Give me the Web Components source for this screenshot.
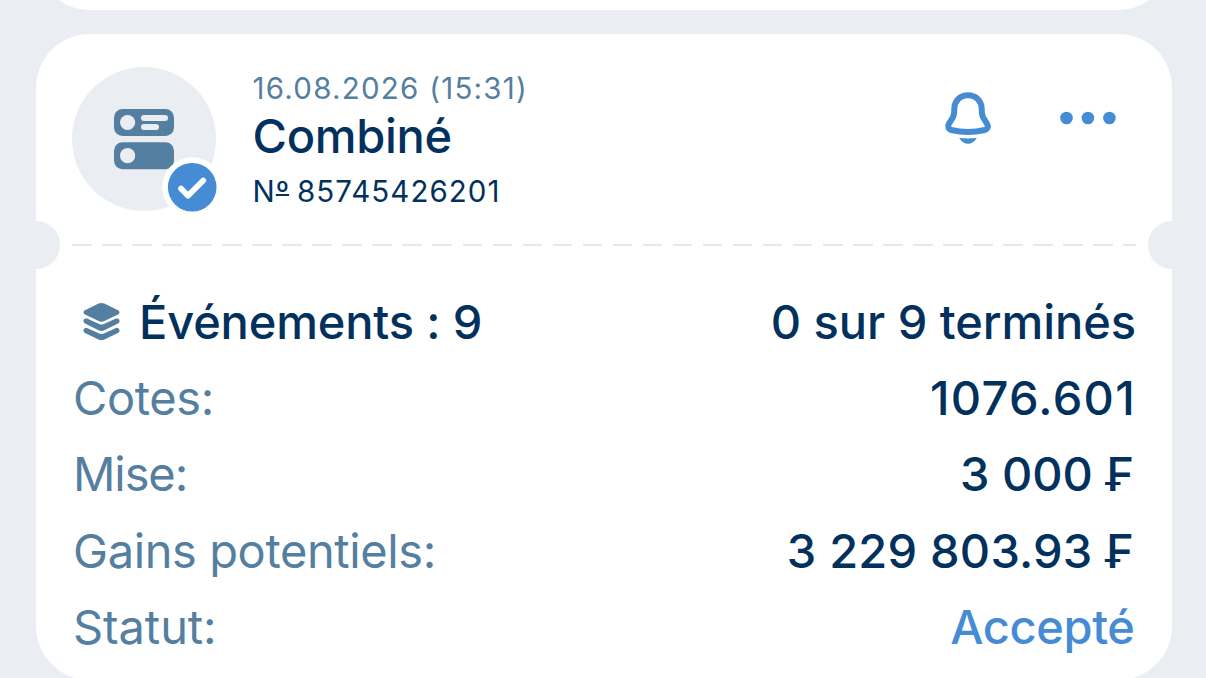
<!DOCTYPE html>
<html lang="fr">
<head>
<meta charset="utf-8">
<title>Coupon</title>
<style>
  body {
    margin: 0;
    height: 678px;
    overflow: hidden;
    background: #eaeef3;
    color: #03315e;
    font-family: Inter, "Liberation Sans", sans-serif;
    --muted: #557fa1;
    --accent: #458cd5;
    --page: #eaeef3;
  }
</style>
</head>
<body>

<bet-list>
  <bet-card class="previous"></bet-card>
  <bet-card>
    <bet-header slot="header" date="16.08.2026 (15:31)" name="Combiné" number="85745426201"></bet-header>
    <bet-row style="--label-spacing: -0.15px; --value-spacing: -0.05px" strong>
      <bet-icon slot="icon" name="layers"></bet-icon>
      Événements : 9
      <span slot="value">0 sur 9 terminés</span>
    </bet-row>
    <bet-row style="--value-spacing: 1.3px; --value-end: 0px">Cotes:<span slot="value">1076.601</span></bet-row>
    <bet-row style="--label-spacing: -1.1px; --value-end: 2px">Mise:<span slot="value">3 000 ₣</span></bet-row>
    <bet-row style="--value-spacing: 0.2px; --value-end: 2px">Gains potentiels:<span slot="value">3 229 803.93 ₣</span></bet-row>
    <bet-row style="--label-spacing: -0.1px; --value-spacing: -0.4px; --value-end: 1.5px" accent>Statut:<span slot="value">Accepté</span></bet-row>
  </bet-card>
</bet-list>

<script>
// ICONS (viewBox size = drawn size)
const ICONS = {
  combo: { w: 60, h: 60, svg: `
    <rect width="60" height="27" rx="8.5" fill="var(--muted)"/>
    <rect y="33.3" width="60" height="27" rx="8.5" fill="var(--muted)"/>
    <g fill="var(--page)">
      <circle cx="13.6" cy="13.5" r="7.6"/>
      <circle cx="13.6" cy="46.7" r="7.6"/>
      <rect x="27" y="6" width="27" height="6" rx="3"/>
      <rect x="27" y="15" width="18" height="6" rx="3"/>
    </g>` },
  check: { w: 60, h: 60, svg: `
    <circle cx="30.200" cy="30.300" r="30" fill="#fff"/>
    <circle cx="30.200" cy="30.300" r="24.300" fill="var(--accent)"/>
    <path d="M19 31.500l7 7.200 15.200-15.200" fill="none" stroke="#fff" stroke-width="5.800" stroke-linecap="round" stroke-linejoin="round"/>` },
  bell: { w: 48, h: 54, svg: `
    <path d="M24 4.300C16 4.300 10.400 10 10.300 17.600C10.200 23.400 10 25 7.200 29.200L5 32.700C3.300 35.500 4.200 38.200 7.300 39C18 41.500 30 41.500 40.700 39C43.800 38.200 44.700 35.500 43 32.700L40.800 29.200C38 25 37.800 23.400 37.700 17.600C37.600 10 32 4.300 24 4.300Z" fill="none" stroke="var(--accent)" stroke-width="6" stroke-linejoin="round"/>
    <path d="M15.200 47Q24 47.800 32.800 47C30.500 50.900 27.500 52.800 24 52.800S17.500 50.900 15.200 47Z" fill="var(--accent)"/>` },
  dots: { w: 56, h: 14, svg: `
    <g fill="var(--accent)">
      <circle cx="6.500" cy="7" r="6.300"/>
      <circle cx="27.900" cy="7" r="6.300"/>
      <circle cx="49.400" cy="7" r="6.300"/>
    </g>` },
  layers: { w: 37, h: 40, svg: `
    <g fill="var(--muted)">
      <path d="M15.600 1.600Q18.500.2 21.400 1.600L35 8.300Q38 10.500 35 12.500L21.400 19Q18.500 20.300 15.600 19L2 12.500Q-1 10.500 2 8.300Z"/>
      <path d="M1.600 16.800Q2.600 16.100 4 16.600L16.200 22Q18.500 23 20.800 22L33 16.600Q34.400 16.100 35.400 16.800C37.200 18.200 36.900 20.500 35 21.500L21.400 28.200Q18.500 29.600 15.600 28.200L2 21.500C.1 20.500-.2 18.200 1.600 16.800Z"/>
      <path d="M1.600 26.200Q2.600 25.500 4 26L16.200 31.500Q18.500 32.500 20.800 31.500L33 26Q34.400 25.500 35.400 26.200C37.200 27.600 36.900 29.900 35 30.900L21.400 37.600Q18.500 39 15.600 37.600L2 30.900C.1 29.900-.2 27.600 1.600 26.200Z"/>
    </g>` }
};

class BetIcon extends HTMLElement {
  connectedCallback() {
    const { w, h, svg } = ICONS[this.getAttribute("name")];
    this.attachShadow({ mode: "open" }).innerHTML = `
      <style>
        :host { display: block; flex: none; }
        svg { display: block; overflow: visible; }
      </style>
      <svg width="${w}" height="${h}" viewBox="0 0 ${w} ${h}">${svg}</svg>
    `;
  }
}

class BetList extends HTMLElement {
  connectedCallback() {
    this.attachShadow({ mode: "open" }).innerHTML = `
      <style>
        :host {
          display: flex;
          flex-direction: column;
          gap: 24px;
          padding: 0 34px 0 36px;
        }
      </style>
      <slot></slot>
    `;
  }
}

class BetCard extends HTMLElement {
  connectedCallback() {
    this.attachShadow({ mode: "open" }).innerHTML = `
      <style>
        :host {
          display: block;
          box-sizing: border-box;
          height: 646px;
          padding: 33px 36px 0;
          border-radius: 54px;
          background: #fff;
        }
        :host(.previous) {
          height: 200px;
          margin-top: -190px;
        }
        :host(.previous) .divider { display: none; }

        .divider {
          display: flex;
          align-items: center;
          justify-content: space-between;
          height: 48px;
          margin: 9px -36px 0;
        }
        .notch {
          width: 24px;
          height: 48px;
          background: var(--page);
        }
        .left { border-radius: 0 24px 24px 0; }
        .right { border-radius: 24px 0 0 24px; }
        .dashes {
          width: 1064px;
          height: 2px;
          background: repeating-linear-gradient(90deg, #e5e8ee 0 19.5px, transparent 19.5px 30.04px);
        }
        .rows { padding-top: 15px; }
      </style>
      <slot name="header"></slot>
      <div class="divider">
        <div class="notch left"></div>
        <div class="dashes"></div>
        <div class="notch right"></div>
      </div>
      <div class="rows"><slot></slot></div>
    `;
  }
}

class BetHeader extends HTMLElement {
  connectedCallback() {
    this.attachShadow({ mode: "open" }).innerHTML = `
      <style>
        :host {
          display: flex;
          height: 145px;
        }
        .avatar {
          position: relative;
          display: grid;
          place-items: center;
          flex: none;
          width: 144px;
          height: 144px;
          border-radius: 50%;
          background: var(--page);
        }
        .badge {
          position: absolute;
          right: -6px;
          bottom: -6px;
        }
        .info {
          flex: 1;
          margin-left: 36.5px;
          white-space: nowrap;
        }
        .date {
          margin-top: 2px;
          font-size: 29.5px;
          line-height: 38px;
          letter-spacing: 1.25px;
          color: var(--muted);
        }
        .name {
          font-size: 47px;
          font-weight: 500;
          line-height: 58px;
          letter-spacing: -0.3px;
        }
        .number {
          margin-top: 7px;
          font-size: 29.5px;
          line-height: 38px;
          letter-spacing: 1.05px;
        }
        .ordinal {
          margin-right: -1.5px;
          text-decoration: underline 2px;
          text-decoration-skip-ink: none;
          text-underline-offset: -8px;
          letter-spacing: 0;
        }
        .actions {
          display: flex;
          align-items: center;
          gap: 68px;
          height: 102px;
          margin-right: 20px;
        }
      </style>
      <div class="avatar">
        <bet-icon name="combo"></bet-icon>
        <bet-icon class="badge" name="check"></bet-icon>
      </div>
      <div class="info">
        <div class="date">${this.getAttribute("date")}</div>
        <div class="name">${this.getAttribute("name")}</div>
        <div class="number">N<span class="ordinal">º</span> ${this.getAttribute("number")}</div>
      </div>
      <div class="actions">
        <bet-icon name="bell"></bet-icon>
        <bet-icon name="dots"></bet-icon>
      </div>
    `;
  }
}

class BetRow extends HTMLElement {
  connectedCallback() {
    this.attachShadow({ mode: "open" }).innerHTML = `
      <style>
        :host {
          display: flex;
          align-items: center;
          height: 76.2px;
          font-size: 47px;
          line-height: 76px;
          white-space: nowrap;
        }
        .label {
          flex: 1;
          padding-left: 1px;
          color: var(--muted);
          letter-spacing: var(--label-spacing, -0.4px);
        }
        .value {
          padding-right: var(--value-end, 0);
          font-weight: 500;
          letter-spacing: var(--value-spacing, 0);
        }
        :host([strong]) .label {
          color: inherit;
          font-weight: 500;
        }
        :host([accent]) .value {
          color: var(--accent);
        }
        ::slotted(bet-icon) { margin: 0 18px 0 11px; }
      </style>
      <slot name="icon"></slot>
      <div class="label"><slot></slot></div>
      <div class="value"><slot name="value"></slot></div>
    `;
  }
}

customElements.define("bet-icon", BetIcon);
customElements.define("bet-list", BetList);
customElements.define("bet-card", BetCard);
customElements.define("bet-header", BetHeader);
customElements.define("bet-row", BetRow);
</script>
</body>
</html>
